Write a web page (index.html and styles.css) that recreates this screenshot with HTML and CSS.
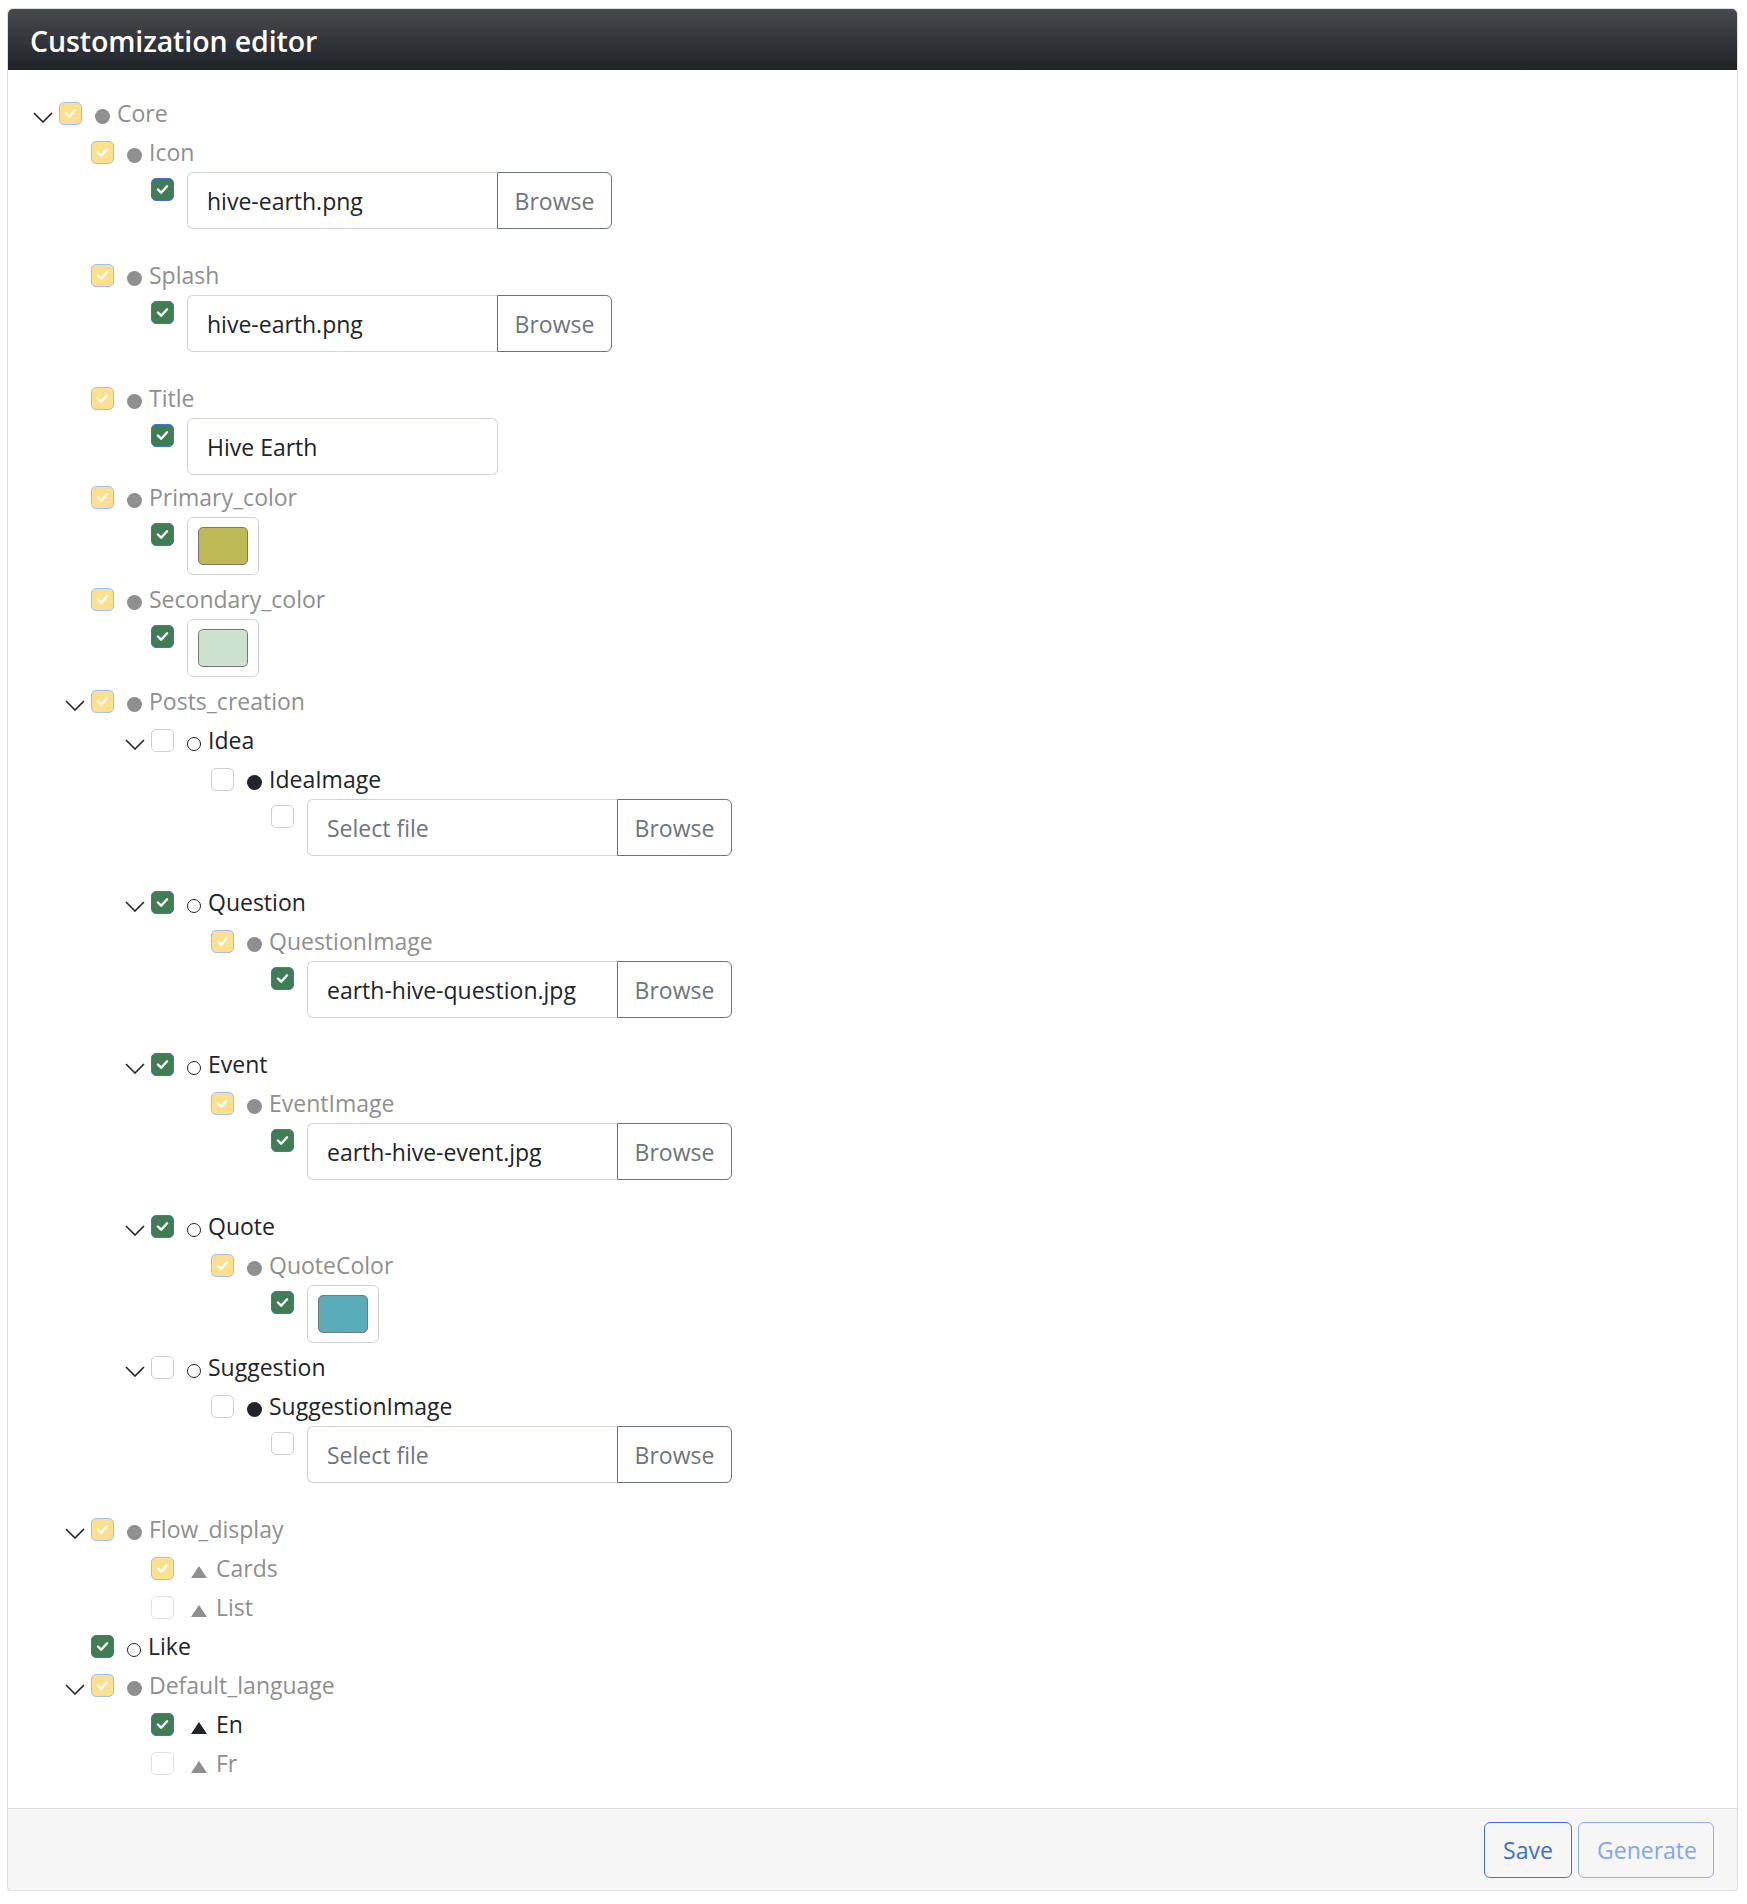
FILE: index.html
```html
<!DOCTYPE html>
<html lang="en">
<head>
<meta charset="utf-8">
<title>Customization editor</title>
<link rel="stylesheet" href="styles.css">
</head>
<body>
<div class="card">
  <div class="card-header">Customization editor</div>
  <div class="card-body">
    <ul class="tree">
      <li>
        <div class="row muted">
          <span class="toggle"><svg viewBox="0 0 20 11" width="20" height="11"><polyline points="1,1 10,10 19,1"/></svg></span>
          <span class="cb cb-partial"><svg viewBox="0 0 23 23"><polyline points="6.5,11.5 10,15 16.5,8"/></svg></span>
          <span class="ic dot"></span><span class="label">Core</span>
        </div>
        <ul>
          <li>
            <div class="row muted">
              <span class="toggle"></span>
              <span class="cb cb-partial"><svg viewBox="0 0 23 23"><polyline points="6.5,11.5 10,15 16.5,8"/></svg></span>
              <span class="ic dot"></span><span class="label">Icon</span>
            </div>
            <ul>
              <li class="value value-file">
                <span class="toggle"></span>
                <span class="cb cb-on"><svg viewBox="0 0 23 23"><polyline points="6.5,11.5 10,15 16.5,8"/></svg></span>
                <div class="file"><span class="file-name">hive-earth.png</span><span class="file-btn">Browse</span></div>
              </li>
            </ul>
          </li>
          <li>
            <div class="row muted">
              <span class="toggle"></span>
              <span class="cb cb-partial"><svg viewBox="0 0 23 23"><polyline points="6.5,11.5 10,15 16.5,8"/></svg></span>
              <span class="ic dot"></span><span class="label">Splash</span>
            </div>
            <ul>
              <li class="value value-file">
                <span class="toggle"></span>
                <span class="cb cb-on"><svg viewBox="0 0 23 23"><polyline points="6.5,11.5 10,15 16.5,8"/></svg></span>
                <div class="file"><span class="file-name">hive-earth.png</span><span class="file-btn">Browse</span></div>
              </li>
            </ul>
          </li>
          <li>
            <div class="row muted">
              <span class="toggle"></span>
              <span class="cb cb-partial"><svg viewBox="0 0 23 23"><polyline points="6.5,11.5 10,15 16.5,8"/></svg></span>
              <span class="ic dot"></span><span class="label">Title</span>
            </div>
            <ul>
              <li class="value value-text">
                <span class="toggle"></span>
                <span class="cb cb-on"><svg viewBox="0 0 23 23"><polyline points="6.5,11.5 10,15 16.5,8"/></svg></span>
                <div class="text-input">Hive Earth</div>
              </li>
            </ul>
          </li>
          <li>
            <div class="row muted">
              <span class="toggle"></span>
              <span class="cb cb-partial"><svg viewBox="0 0 23 23"><polyline points="6.5,11.5 10,15 16.5,8"/></svg></span>
              <span class="ic dot"></span><span class="label">Primary_color</span>
            </div>
            <ul>
              <li class="value value-color">
                <span class="toggle"></span>
                <span class="cb cb-on"><svg viewBox="0 0 23 23"><polyline points="6.5,11.5 10,15 16.5,8"/></svg></span>
                <div class="color-input"><span class="swatch swatch-primary"></span></div>
              </li>
            </ul>
          </li>
          <li>
            <div class="row muted">
              <span class="toggle"></span>
              <span class="cb cb-partial"><svg viewBox="0 0 23 23"><polyline points="6.5,11.5 10,15 16.5,8"/></svg></span>
              <span class="ic dot"></span><span class="label">Secondary_color</span>
            </div>
            <ul>
              <li class="value value-color">
                <span class="toggle"></span>
                <span class="cb cb-on"><svg viewBox="0 0 23 23"><polyline points="6.5,11.5 10,15 16.5,8"/></svg></span>
                <div class="color-input"><span class="swatch swatch-secondary"></span></div>
              </li>
            </ul>
          </li>
          <li>
            <div class="row muted">
              <span class="toggle"><svg viewBox="0 0 20 11" width="20" height="11"><polyline points="1,1 10,10 19,1"/></svg></span>
              <span class="cb cb-partial"><svg viewBox="0 0 23 23"><polyline points="6.5,11.5 10,15 16.5,8"/></svg></span>
              <span class="ic dot"></span><span class="label">Posts_creation</span>
            </div>
            <ul>
              <li>
                <div class="row">
                  <span class="toggle"><svg viewBox="0 0 20 11" width="20" height="11"><polyline points="1,1 10,10 19,1"/></svg></span>
                  <span class="cb"></span>
                  <span class="ic ring"></span><span class="label">Idea</span>
                </div>
                <ul>
                  <li>
                    <div class="row">
                      <span class="toggle"></span>
                      <span class="cb"></span>
                      <span class="ic dot dot-dark"></span><span class="label">IdeaImage</span>
                    </div>
                    <ul>
                      <li class="value value-file">
                        <span class="toggle"></span>
                        <span class="cb"></span>
                        <div class="file"><span class="file-name placeholder">Select file</span><span class="file-btn">Browse</span></div>
                      </li>
                    </ul>
                  </li>
                </ul>
              </li>
              <li>
                <div class="row">
                  <span class="toggle"><svg viewBox="0 0 20 11" width="20" height="11"><polyline points="1,1 10,10 19,1"/></svg></span>
                  <span class="cb cb-on"><svg viewBox="0 0 23 23"><polyline points="6.5,11.5 10,15 16.5,8"/></svg></span>
                  <span class="ic ring"></span><span class="label">Question</span>
                </div>
                <ul>
                  <li>
                    <div class="row muted">
                      <span class="toggle"></span>
                      <span class="cb cb-partial"><svg viewBox="0 0 23 23"><polyline points="6.5,11.5 10,15 16.5,8"/></svg></span>
                      <span class="ic dot"></span><span class="label">QuestionImage</span>
                    </div>
                    <ul>
                      <li class="value value-file">
                        <span class="toggle"></span>
                        <span class="cb cb-on"><svg viewBox="0 0 23 23"><polyline points="6.5,11.5 10,15 16.5,8"/></svg></span>
                        <div class="file"><span class="file-name">earth-hive-question.jpg</span><span class="file-btn">Browse</span></div>
                      </li>
                    </ul>
                  </li>
                </ul>
              </li>
              <li>
                <div class="row">
                  <span class="toggle"><svg viewBox="0 0 20 11" width="20" height="11"><polyline points="1,1 10,10 19,1"/></svg></span>
                  <span class="cb cb-on"><svg viewBox="0 0 23 23"><polyline points="6.5,11.5 10,15 16.5,8"/></svg></span>
                  <span class="ic ring"></span><span class="label">Event</span>
                </div>
                <ul>
                  <li>
                    <div class="row muted">
                      <span class="toggle"></span>
                      <span class="cb cb-partial"><svg viewBox="0 0 23 23"><polyline points="6.5,11.5 10,15 16.5,8"/></svg></span>
                      <span class="ic dot"></span><span class="label">EventImage</span>
                    </div>
                    <ul>
                      <li class="value value-file">
                        <span class="toggle"></span>
                        <span class="cb cb-on"><svg viewBox="0 0 23 23"><polyline points="6.5,11.5 10,15 16.5,8"/></svg></span>
                        <div class="file"><span class="file-name">earth-hive-event.jpg</span><span class="file-btn">Browse</span></div>
                      </li>
                    </ul>
                  </li>
                </ul>
              </li>
              <li>
                <div class="row">
                  <span class="toggle"><svg viewBox="0 0 20 11" width="20" height="11"><polyline points="1,1 10,10 19,1"/></svg></span>
                  <span class="cb cb-on"><svg viewBox="0 0 23 23"><polyline points="6.5,11.5 10,15 16.5,8"/></svg></span>
                  <span class="ic ring"></span><span class="label">Quote</span>
                </div>
                <ul>
                  <li>
                    <div class="row muted">
                      <span class="toggle"></span>
                      <span class="cb cb-partial"><svg viewBox="0 0 23 23"><polyline points="6.5,11.5 10,15 16.5,8"/></svg></span>
                      <span class="ic dot"></span><span class="label">QuoteColor</span>
                    </div>
                    <ul>
                      <li class="value value-color">
                        <span class="toggle"></span>
                        <span class="cb cb-on"><svg viewBox="0 0 23 23"><polyline points="6.5,11.5 10,15 16.5,8"/></svg></span>
                        <div class="color-input"><span class="swatch swatch-quote"></span></div>
                      </li>
                    </ul>
                  </li>
                </ul>
              </li>
              <li>
                <div class="row">
                  <span class="toggle"><svg viewBox="0 0 20 11" width="20" height="11"><polyline points="1,1 10,10 19,1"/></svg></span>
                  <span class="cb"></span>
                  <span class="ic ring"></span><span class="label">Suggestion</span>
                </div>
                <ul>
                  <li>
                    <div class="row">
                      <span class="toggle"></span>
                      <span class="cb"></span>
                      <span class="ic dot dot-dark"></span><span class="label">SuggestionImage</span>
                    </div>
                    <ul>
                      <li class="value value-file">
                        <span class="toggle"></span>
                        <span class="cb"></span>
                        <div class="file"><span class="file-name placeholder">Select file</span><span class="file-btn">Browse</span></div>
                      </li>
                    </ul>
                  </li>
                </ul>
              </li>
            </ul>
          </li>
          <li>
            <div class="row muted">
              <span class="toggle"><svg viewBox="0 0 20 11" width="20" height="11"><polyline points="1,1 10,10 19,1"/></svg></span>
              <span class="cb cb-partial"><svg viewBox="0 0 23 23"><polyline points="6.5,11.5 10,15 16.5,8"/></svg></span>
              <span class="ic dot"></span><span class="label">Flow_display</span>
            </div>
            <ul>
              <li>
                <div class="row muted">
                  <span class="toggle"></span>
                  <span class="cb cb-partial"><svg viewBox="0 0 23 23"><polyline points="6.5,11.5 10,15 16.5,8"/></svg></span>
                  <span class="ic tri"></span><span class="label">Cards</span>
                </div>
              </li>
              <li>
                <div class="row muted">
                  <span class="toggle"></span>
                  <span class="cb cb-faint"></span>
                  <span class="ic tri"></span><span class="label">List</span>
                </div>
              </li>
            </ul>
          </li>
          <li>
            <div class="row">
              <span class="toggle"></span>
              <span class="cb cb-on"><svg viewBox="0 0 23 23"><polyline points="6.5,11.5 10,15 16.5,8"/></svg></span>
              <span class="ic ring"></span><span class="label">Like</span>
            </div>
          </li>
          <li>
            <div class="row muted">
              <span class="toggle"><svg viewBox="0 0 20 11" width="20" height="11"><polyline points="1,1 10,10 19,1"/></svg></span>
              <span class="cb cb-partial"><svg viewBox="0 0 23 23"><polyline points="6.5,11.5 10,15 16.5,8"/></svg></span>
              <span class="ic dot"></span><span class="label">Default_language</span>
            </div>
            <ul>
              <li>
                <div class="row">
                  <span class="toggle"></span>
                  <span class="cb cb-on"><svg viewBox="0 0 23 23"><polyline points="6.5,11.5 10,15 16.5,8"/></svg></span>
                  <span class="ic tri tri-dark"></span><span class="label">En</span>
                </div>
              </li>
              <li>
                <div class="row muted">
                  <span class="toggle"></span>
                  <span class="cb cb-faint"></span>
                  <span class="ic tri"></span><span class="label">Fr</span>
                </div>
              </li>
            </ul>
          </li>
        </ul>
      </li>
    </ul>
  </div>
  <div class="card-footer">
    <button class="btn btn-save">Save</button>
    <button class="btn btn-generate">Generate</button>
  </div>
</div>
</body>
</html>
```

FILE: styles.css
```css
* { box-sizing: border-box; }

html, body { background: #ffffff; }

body {
  margin: 8px 9px 15px 7px;
  font-family: "Open Sans", "Noto Sans", "Liberation Sans", sans-serif;
  color: #212529;
}

.card {
  border: 1px solid #dedede;
  border-radius: 6px;
  background: #fff;
  box-shadow: 0 3px 10px rgba(0, 0, 0, 0.16);
  overflow: hidden;
}

.card-header {
  height: 61px;
  display: flex;
  align-items: center;
  padding: 3px 22px 0;
  background: linear-gradient(#474a4f, #1f2226);
  color: #fff;
  font-size: 28.5px;
  font-weight: 600;
  letter-spacing: -0.1px;
}

.card-body {
  padding: 24px 25px 25px;
}

.tree, .tree ul {
  list-style: none;
  margin: 0;
  padding: 0;
}

.tree ul { padding-left: 60px; }
.tree > li > ul { padding-left: 32px; }

.row {
  display: flex;
  align-items: center;
  height: 39px;
  font-size: 23px;
  line-height: 1;
  color: #212529;
}

.row.muted { color: #8f8f8f; }

.toggle {
  width: 26px;
  flex: none;
  display: flex;
  align-items: center;
  margin-top: 7px;
}

.toggle svg {
  display: block;
  fill: none;
  stroke: #212529;
  stroke-width: 1.6;
}

.cb {
  width: 23px;
  height: 23px;
  flex: none;
  border: 1px solid #cfcfcf;
  border-radius: 5px;
  background: #fff;
  display: flex;
  align-items: center;
  justify-content: center;
}

.cb svg {
  width: 23px;
  height: 23px;
  display: block;
  fill: none;
  stroke: #fff;
  stroke-width: 2.6;
  stroke-linecap: round;
  stroke-linejoin: round;
}

.cb-partial {
  background: #fde08d;
  border-color: #9fc0f1;
}

.cb-on {
  background: #3f7e55;
  border-color: #3f73d8;
}

.cb-faint { border-color: #e2e2e2; }

.ic {
  flex: none;
  margin-left: 13px;
  margin-right: 7px;
  margin-top: 6px;
}

.dot {
  width: 15px;
  height: 15px;
  border-radius: 50%;
  background: #8f8f8f;
}

.dot-dark { background: #212529; }

.ring {
  width: 14px;
  height: 14px;
  border-radius: 50%;
  border: 1.3px solid #212529;
}

.tri {
  width: 0;
  height: 0;
  margin-left: 17px;
  margin-right: 9px;
  border-left: 8.5px solid transparent;
  border-right: 8.5px solid transparent;
  border-bottom: 12px solid #8f8f8f;
}

.tri-dark { border-bottom-color: #212529; }

.label { white-space: nowrap; }

/* value rows */
.value {
  display: flex;
  align-items: flex-start;
}

.value .cb {
  margin-top: 6px;
  margin-right: 13px;
}

.value-file { margin-bottom: 27px; }
.value-text { margin-bottom: 3px; }
.value-color { margin-bottom: 5px; }

.file {
  display: flex;
  height: 57px;
  font-size: 23px;
}

.file-name {
  width: 310px;
  border: 1px solid #ced4da;
  border-right: none;
  border-radius: 6px 0 0 6px;
  padding: 0 19px;
  display: flex;
  align-items: center;
  color: #212529;
  white-space: nowrap;
}

.file-name.placeholder { color: #6c757d; }

.file-btn {
  width: 115px;
  border: 1px solid #6c757d;
  border-radius: 0 6px 6px 0;
  color: #6c757d;
  display: flex;
  align-items: center;
  justify-content: center;
}

.text-input {
  width: 311px;
  height: 57px;
  border: 1px solid #ced4da;
  border-radius: 6px;
  padding: 0 19px;
  display: flex;
  align-items: center;
  font-size: 23px;
  color: #212529;
}

.color-input {
  width: 72px;
  height: 58px;
  border: 1px solid #ced4da;
  border-radius: 6px;
  padding: 9px 10px;
}

.swatch {
  display: block;
  width: 100%;
  height: 100%;
  border: 1px solid #777;
  border-radius: 5px;
}

.swatch-primary { background: #bcba55; }
.swatch-secondary { background: #cce2cf; }
.swatch-quote { background: #58adb8; }

.card-footer {
  display: flex;
  justify-content: flex-end;
  gap: 6px;
  padding: 13px 23px 12px;
  border-top: 1px solid #dcdcdc;
  background: #f6f6f6;
}

.btn {
  height: 56px;
  padding: 0 18px;
  border-radius: 6px;
  background: transparent;
  font-family: inherit;
  font-size: 23px;
}

.btn-save {
  width: 88px;
  border: 1px solid #3c72e0;
  color: #3a6ee0;
}

.btn-generate {
  width: 136px;
  border: 1px solid #8db0f2;
  color: #82a6ef;
}
```
